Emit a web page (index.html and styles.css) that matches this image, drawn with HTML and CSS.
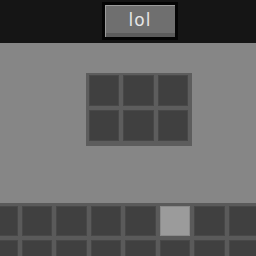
FILE: index.html
```html
<!DOCTYPE html>
<html lang="en">
<head>
  <meta charset="UTF-8" />
  <title>Inventory</title>
  <link rel="stylesheet" href="styles.css">
</head>
<body>

<div class="topbar">
  <button class="mc-btn">lol</button>
</div>

<div class="crafting">
  <div class="slot"></div>
  <div class="slot"></div>
  <div class="slot"></div>
  <div class="slot"></div>
  <div class="slot"></div>
  <div class="slot"></div>
</div>

<div class="hotbar">
  <div class="slot"></div>
  <div class="slot"></div>
  <div class="slot"></div>
  <div class="slot"></div>
  <div class="slot"></div>
  <div class="slot selected"></div>
  <div class="slot"></div>
  <div class="slot"></div>
  <div class="slot"></div>
  <div class="slot"></div>
  <div class="slot"></div>
  <div class="slot"></div>
  <div class="slot"></div>
  <div class="slot"></div>
  <div class="slot"></div>
  <div class="slot"></div>
  <div class="slot"></div>
  <div class="slot"></div>
</div>

</body>
</html>
```

FILE: styles.css
```css
* {
  margin: 0;
  padding: 0;
  box-sizing: border-box;
}

body {
  background: #868686;
  font-family: 'DejaVu Sans', sans-serif;
  width: 256px;
  height: 256px;
  overflow: hidden;
}

.topbar {
  background: #151515;
  height: 43px;
  padding: 2px 0 0 102px;
}

.mc-btn {
  width: 76px;
  height: 38px;
  border: 3px solid #050505;
  background: #6f6f6f;
  box-shadow: inset 1px 1px 0 #9c9c9c, inset 0 -4px 0 #5c5c5c;
  color: #e6e6e6;
  font-family: 'DejaVu Sans', sans-serif;
  font-size: 17px;
  letter-spacing: 1px;
  line-height: 30px;
  padding-bottom: 3px;
  text-align: center;
}

.crafting {
  margin: 30px 0 0 86px;
  width: 106px;
  height: 73px;
  background: #5d5d5d;
  padding: 2px 3px 6px 2.5px;
  display: grid;
  grid-template-columns: repeat(3, 30.5px);
  grid-template-rows: repeat(2, 31px);
  gap: 4px;
}

.slot {
  background: #404040;
  border: 1px solid #484848;
}

.hotbar {
  margin: 57px 0 0 -13px;
  padding-top: 2.5px;
  background: #5a5a5a;
  display: grid;
  grid-template-columns: repeat(9, 30.5px);
  grid-auto-rows: 30.5px;
  gap: 4px;
  width: 320px;
}

.slot.selected {
  background: #9b9b9b;
  border-color: #8a8a8a;
}
```
